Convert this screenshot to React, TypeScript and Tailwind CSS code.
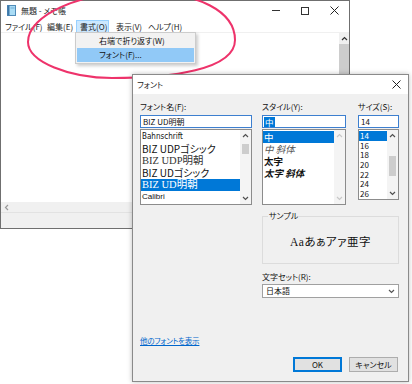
import type { ReactNode } from 'react'

function Chevron({ up, color = '#505050' }: { up?: boolean; color?: string }) {
  return (
    <svg width="7" height="5" viewBox="0 0 7 5">
      <polyline
        points={up ? '1,4 3.5,1.5 6,4' : '1,1 3.5,3.5 6,1'}
        fill="none"
        stroke={color}
        strokeWidth="1.2"
      />
    </svg>
  )
}

function CloseIcon() {
  return (
    <svg width="9" height="9" viewBox="0 0 9 9">
      <path d="M0.5 0.5L8.5 8.5M8.5 0.5L0.5 8.5" stroke="#222" strokeWidth="1" />
    </svg>
  )
}

function NotepadIcon() {
  return (
    <svg width="9" height="11" viewBox="0 0 9 11">
      <rect x="0.5" y="0.5" width="8" height="10" fill="#a9dcf5" stroke="#4f8bb8" />
      <rect x="0.5" y="0.5" width="2" height="10" fill="#3d76a8" />
      <line x1="3.5" y1="3" x2="7.5" y2="3" stroke="#6fa9d4" />
    </svg>
  )
}

function Label({ children }: { children: ReactNode }) {
  return <div className="h-[10px] text-[8px] leading-[10px] text-[#111]">{children}</div>
}

function Scroll({ thumb, disabled, h }: { thumb?: string; disabled?: boolean; h: string }) {
  const c = disabled ? '#c8c8c8' : '#505050'
  return (
    <div className={`flex w-[11px] flex-col items-center bg-[#f4f4f4] ${h}`}>
      <div className="flex h-[11px] items-center">
        <Chevron up color={c} />
      </div>
      <div className="relative w-full flex-1">
        {thumb && <div className={`absolute left-[2px] right-[2px] bg-[#cdcdcd] ${thumb}`} />}
      </div>
      <div className="flex h-[11px] items-center">
        <Chevron color={c} />
      </div>
    </div>
  )
}

const fontRows = [
  { name: 'Bahnschrift', cls: "font-['DejaVu_Sans_Condensed'] text-[8px]" },
  { name: 'BIZ UDPゴシック', cls: 'text-[10px]' },
  { name: 'BIZ UDP明朝', cls: "font-['Liberation_Serif','Noto_Sans_CJK_JP'] text-[10.5px] text-[#333]" },
  { name: 'BIZ UDゴシック', cls: 'text-[10px]' },
  { name: 'BIZ UD明朝', cls: "font-['Liberation_Serif','Noto_Sans_CJK_JP'] text-[10.5px]", sel: true },
  { name: 'Calibri', cls: "font-['Liberation_Sans'] text-[8px]" },
]

const sizes = ['14', '16', '18', '20', '22', '24', '26']

export default function App() {
  return (
    <div className="relative h-[384px] w-[412px] overflow-hidden bg-white font-['Noto_Sans_CJK_JP','Noto_Sans',sans-serif] text-[#111] [font-feature-settings:'palt']">
      {/* notepad window */}
      <div className="absolute left-0 top-0 flex h-[229px] w-[350px] flex-col border border-[#6f6f6f] bg-white">
        <div className="flex h-[19px] shrink-0 items-center pl-[6px]">
          <NotepadIcon />
          <span className="ml-[5px] text-[8px] text-[#222]">無題 - メモ帳</span>
          <div className="ml-auto flex h-full items-center">
            <div className="flex w-[29px] justify-center">
              <div className="h-px w-[8px] bg-[#333]" />
            </div>
            <div className="flex w-[29px] justify-center">
              <div className="h-[8px] w-[8px] border border-[#333]" />
            </div>
            <div className="flex w-[30px] justify-center">
              <CloseIcon />
            </div>
          </div>
        </div>
        <div className="flex h-[13px] shrink-0 items-center border-b border-[#f0f0f0] text-[8px] leading-[11px] text-[#222]">
          <span className="w-[42px] pl-[4px]">ファイル(F)</span>
          <span className="w-[33px] pl-[4px]">編集(E)</span>
          <span className="w-[33px] border border-[#99d1ff] bg-[#cce8ff] pl-[3px]">書式(O)</span>
          <span className="w-[36px] pl-[7px]">表示(V)</span>
          <span className="pl-[3px]">ヘルプ(H)</span>
        </div>
        <div className="flex h-[169px] shrink-0">
          <div className="flex-1" />
          <div className="flex w-[10px] flex-col items-center bg-[#f0f0f0]">
            <div className="flex h-[11px] items-center">
              <Chevron up color="#333" />
            </div>
            <div className="h-[110px] w-full bg-[#cdcdcd]" />
          </div>
        </div>
        <div className="flex h-[10px] shrink-0 items-center bg-[#f0f0f0] pl-[3px]">
          <svg width="5" height="7" viewBox="0 0 5 7">
            <polyline points="4,1 1.5,3.5 4,6" fill="none" stroke="#999" strokeWidth="1.2" />
          </svg>
        </div>
        <div className="flex-1 border-t border-[#e2e2e2] bg-[#f0f0f0]" />

        <div className="absolute left-[74px] top-[31px] flex h-[32px] w-[121px] flex-col border border-[#cccccc] bg-[#f2f2f2] p-[1px] text-[8px] text-[#111] shadow-[2px_2px_3px_rgba(0,0,0,0.2)]">
          <div className="flex h-[14px] items-center pl-[22px]">右端で折り返す(W)</div>
          <div className="flex h-[14px] items-center bg-[#91c9f7] pl-[22px]">フォント(F)...</div>
        </div>
      </div>

      {/* annotation ellipse */}
      <svg className="pointer-events-none absolute left-0 top-0" width="412" height="384" viewBox="0 0 412 384">
        <path
          d="M28 42 C28 62 70 78 112 78 C170 78 235 70 235 40 C235 12 200 -8 140 -8 C80 -8 28 15 28 42 Z"
          fill="none"
          stroke="#ee336b"
          strokeWidth="2"
        />
      </svg>

      {/* font dialog */}
      <div className="absolute left-[132px] top-[74px] flex h-[308px] w-[277px] flex-col border border-[#8a8a8a] bg-[#f0f0f0] shadow-[0_0_5px_rgba(0,0,0,0.25)]">
        <div className="flex h-[19px] shrink-0 items-center justify-between bg-white pl-[4px] pr-[7px]">
          <span className="text-[8px] text-[#222]">フォント</span>
          <CloseIcon />
        </div>
        <div className="px-[7px] pt-[8px]">
          <div className="flex">
            <div className="w-[112px]">
              <Label>フォント名(F):</Label>
              <div className="mt-[3px] flex h-[13px] items-center border border-[#3d7fcf] bg-white pl-[2px] text-[8px]">
                BIZ UD明朝
              </div>
              <div className="mt-px flex h-[76px] border border-[#8c8c8c] bg-white">
                <div className="min-w-0 flex-1 pt-px">
                  {fontRows.map((r) => (
                    <div
                      key={r.name}
                      className={`flex h-[12px] items-center whitespace-nowrap pl-px leading-[12px] ${r.cls} ${r.sel ? 'bg-[#0078d7] text-white' : ''}`}
                    >
                      {r.name}
                    </div>
                  ))}
                </div>
                <Scroll h="h-full" thumb="top-[3px] h-[10px]" />
              </div>
            </div>

            <div className="ml-[10px] w-[84px]">
              <Label>スタイル(Y):</Label>
              <div className="mt-[3px] flex h-[13px] items-center border border-[#3d7fcf] bg-white pl-px">
                <span className="bg-[#0078d7] px-px text-[8.5px] leading-[10px] text-white">中</span>
              </div>
              <div className="mt-px flex h-[76px] border border-[#8c8c8c] bg-white">
                <div className="flex-1 pt-px text-[9.5px] leading-[12px]">
                  <div className="flex h-[12px] items-center bg-[#0078d7] pl-px text-white">中</div>
                  <div className="flex h-[12px] items-center pl-px italic text-[#555]">中 斜体</div>
                  <div className="flex h-[12px] items-center pl-px font-bold">太字</div>
                  <div className="flex h-[12px] items-center pl-px font-bold italic">太字 斜体</div>
                </div>
                <Scroll h="h-full" disabled />
              </div>
            </div>

            <div className="ml-[12px] w-[41px]">
              <Label>サイズ(S):</Label>
              <div className="mt-[3px] flex h-[13px] items-center border border-[#3d7fcf] bg-white pl-[2px] text-[8px]">
                14
              </div>
              <div className="mt-px flex h-[71px] border border-[#8c8c8c] bg-white">
                <div className="flex-1 pt-px text-[8px] leading-[9.7px]">
                  {sizes.map((s, i) => (
                    <div
                      key={s}
                      className={`flex h-[9.7px] items-center pl-px ${i === 0 ? 'bg-[#0078d7] text-white' : ''}`}
                    >
                      {s}
                    </div>
                  ))}
                </div>
                <Scroll h="h-full" thumb="top-[15px] h-[20px]" />
              </div>
            </div>
          </div>

          <div className="flex">
            <div className="w-[112px]">
              <a className="mt-[131px] block text-[7.5px] leading-[10px] tracking-[-0.2px] text-[#0066cc] underline">
                他のフォントを表示
              </a>
            </div>
            <div className="ml-[10px] w-[137px]">
              <div className="relative mt-[11px] flex h-[48px] items-center justify-center border border-[#dcdcdc]">
                <span className="absolute left-[5px] top-[-6px] bg-[#f0f0f0] px-px text-[8px] leading-[10px]">サンプル</span>
                <span className="mt-[5px] font-['Liberation_Serif','Noto_Sans_CJK_JP',serif] text-[11.5px] tracking-[0.5px] text-[#111]">
                  Aaあぁアァ亜字
                </span>
              </div>
              <div className="mt-[8px]">
                <Label>文字セット(R):</Label>
              </div>
              <div className="mt-[2px] flex h-[14px] items-center justify-between border border-[#a0a0a0] bg-white pl-[3px] pr-[3px] text-[8px]">
                <span>日本語</span>
                <Chevron color="#555" />
              </div>
              <div className="mt-[59px] flex justify-end gap-[7px] pr-px">
                <div className="flex h-[15px] w-[49px] items-center justify-center border-2 border-[#0078d7] bg-[#e1e1e1] text-[8px]">
                  OK
                </div>
                <div className="flex h-[15px] w-[49px] items-center justify-center border border-[#adadad] bg-[#e1e1e1] text-[8px]">
                  キャンセル
                </div>
              </div>
            </div>
          </div>
        </div>
      </div>
    </div>
  )
}
